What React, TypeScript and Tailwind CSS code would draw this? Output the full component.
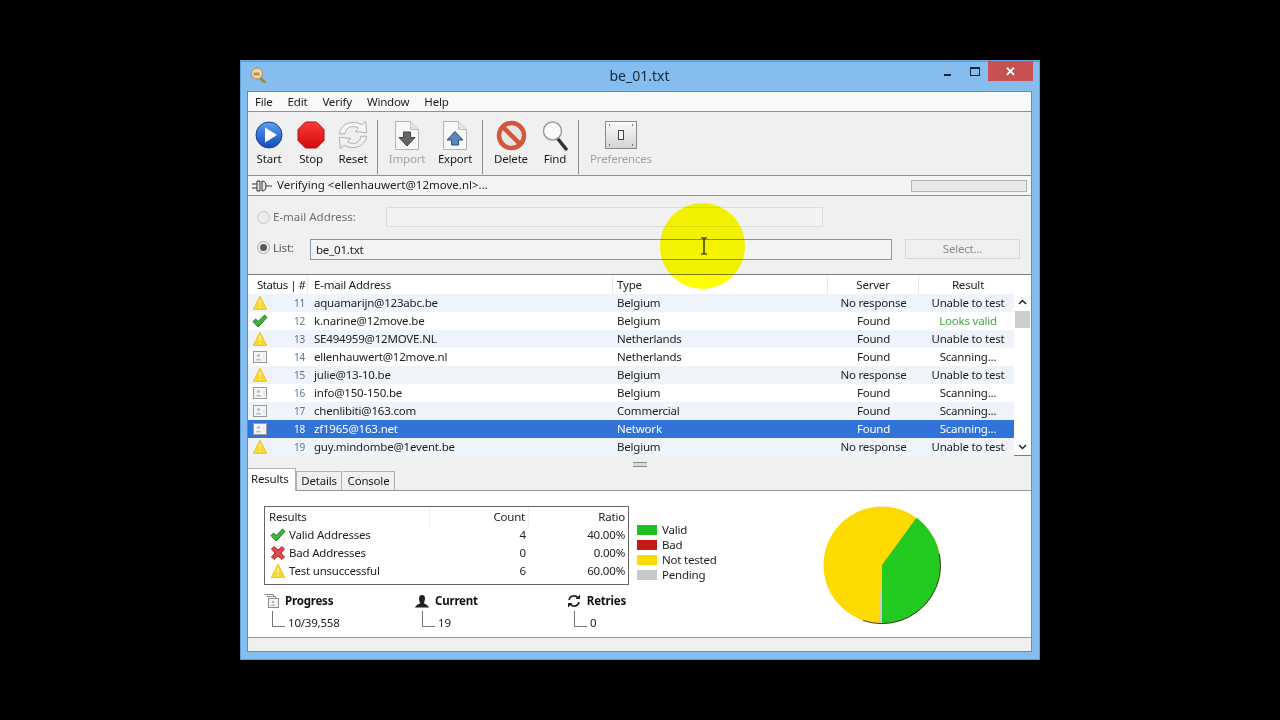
import React from 'react';

const rows = [
  { n: 11, email: 'aquamarijn@123abc.be', type: 'Belgium', server: 'No response', result: 'Unable to test', icon: 'warn' },
  { n: 12, email: 'k.narine@12move.be', type: 'Belgium', server: 'Found', result: 'Looks valid', icon: 'ok' },
  { n: 13, email: 'SE494959@12MOVE.NL', type: 'Netherlands', server: 'Found', result: 'Unable to test', icon: 'warn' },
  { n: 14, email: 'ellenhauwert@12move.nl', type: 'Netherlands', server: 'Found', result: 'Scanning...', icon: 'card' },
  { n: 15, email: 'julie@13-10.be', type: 'Belgium', server: 'No response', result: 'Unable to test', icon: 'warn' },
  { n: 16, email: 'info@150-150.be', type: 'Belgium', server: 'Found', result: 'Scanning...', icon: 'card' },
  { n: 17, email: 'chenlibiti@163.com', type: 'Commercial', server: 'Found', result: 'Scanning...', icon: 'card' },
  { n: 18, email: 'zf1965@163.net', type: 'Network', server: 'Found', result: 'Scanning...', icon: 'card' },
  { n: 19, email: 'guy.mindombe@1event.be', type: 'Belgium', server: 'No response', result: 'Unable to test', icon: 'warn' },
];

const Warn = () => (
  <svg width="16" height="16" viewBox="0 0 16 16">
    <path d="M8 1.200 14.800 14.500H1.200Z" fill="#fcd82e" stroke="#eec52f" strokeWidth="1" strokeLinejoin="round" />
    <path d="M8 5v5" stroke="#fff1a0" strokeWidth="1.600" />
    <circle cx="8" cy="12.200" r="0.900" fill="#fff1a0" />
  </svg>
);

const Check = () => (
  <svg width="16" height="16" viewBox="0 0 16 16">
    <path d="M1 8.600 3.600 6l2.600 2.500L12.600 2 15 4.400 6.200 14Z" fill="#3fb63a" stroke="#1f7a26" strokeWidth="1" strokeLinejoin="round" />
  </svg>
);

const Cross = () => (
  <svg width="16" height="16" viewBox="0 0 16 16">
    <path d="M1.500 4 4 1.500 8 5l4-3.500L14.500 4 11 8l3.500 4-2.500 2.500L8 11l-4 3.500L1.500 12 5 8Z" fill="#e0484c" stroke="#a83538" strokeWidth="1" strokeLinejoin="round" />
  </svg>
);

const Card = () => (
  <svg width="14" height="12" viewBox="0 0 14 12">
    <rect x="0.500" y="0.500" width="13" height="11" fill="#f6f6f6" stroke="#9a9a9a" />
    <circle cx="5.500" cy="4.500" r="1.600" fill="#bdbdbd" />
    <path d="M2.500 9.500c.4-2.200 5.600-2.200 6 0Z" fill="#bdbdbd" />
    <path d="M10 5h2M10 7.500h2" stroke="#d8d8d8" />
  </svg>
);

const StartIcon = () => (
  <svg width="28" height="28" viewBox="0 0 28 28">
    <defs>
      <linearGradient id="startFill" x1="0" y1="0" x2="0" y2="1">
        <stop offset="0" stopColor="#58a3ee" />
        <stop offset="1" stopColor="#1748b8" />
      </linearGradient>
    </defs>
    <circle cx="14" cy="14" r="13" fill="url(#startFill)" stroke="#1c3f94" />
    <path d="M10 6.500 22 14 10 21.500Z" fill="#fff" />
  </svg>
);

const StopIcon = () => (
  <svg width="28" height="28" viewBox="0 0 28 28">
    <defs>
      <linearGradient id="stopFill" x1="0" y1="0" x2="0" y2="1">
        <stop offset="0" stopColor="#fb3a3a" />
        <stop offset="1" stopColor="#d20a0a" />
      </linearGradient>
    </defs>
    <path d="M8.500 1h11L27 8.500v11L19.500 27h-11L1 19.500v-11Z" fill="url(#stopFill)" stroke="#a51616" />
  </svg>
);

const ResetIcon = () => (
  <svg width="32" height="32" viewBox="3 1 26 28">
    <path d="M4 14C5 6 14 1 24 6l3-3 1 10-10-1 3-3C15 6 10 8 9 14Z" fill="#f7f7f7" stroke="#a8a8a8" strokeWidth="0.800" strokeLinejoin="round" />
    <path d="M28 16c-1 8-10 13-20 8l-3 3-1-10 10 1-3 3c6 3 11 1 12-5Z" fill="#f1f1f1" stroke="#a8a8a8" strokeWidth="0.800" strokeLinejoin="round" />
  </svg>
);

const DocArrow = ({ up }: { up?: boolean }) => (
  <svg width="24" height="29" viewBox="0 0 24 29">
    <path d="M.5.5h15l8 8v20H.5Z" fill="#f8f8f8" stroke="#b4b4b4" />
    <path d="M15.500.5v8h8" fill="#e6e6e6" stroke="#c0c0c0" />
    {up ? (
      <path d="M12 10.500 20 19h-4.500v5h-7v-5H4Z" fill="#5c85bb" stroke="#2c4c7a" strokeLinejoin="round" />
    ) : (
      <path d="M8.500 11h7v5.500H20L12 25 4 16.500h4.500Z" fill="#666" stroke="#444" strokeLinejoin="round" />
    )}
  </svg>
);

const DeleteIcon = () => (
  <svg width="31" height="31" viewBox="0 0 31 31">
    <circle cx="15.500" cy="15.500" r="12.500" fill="#e6e6e6" stroke="#d4573a" strokeWidth="4.500" />
    <path d="M7 7 24 24" stroke="#d4573a" strokeWidth="4.500" />
  </svg>
);

const FindIcon = () => (
  <svg width="27" height="31" viewBox="0 0 27 31">
    <path d="M16 19 24 29" stroke="#333" strokeWidth="3.500" strokeLinecap="round" />
    <circle cx="10.500" cy="11" r="9" fill="#fafafa" stroke="#9c9c9c" strokeWidth="1.500" />
  </svg>
);

const PrefsIcon = () => (
  <svg width="32" height="28" viewBox="0 0 32 28">
    <defs>
      <linearGradient id="prefFill" x1="0" y1="0" x2="0" y2="1">
        <stop offset="0" stopColor="#fbfbfb" />
        <stop offset="1" stopColor="#d2d2d2" />
      </linearGradient>
    </defs>
    <rect x="0.500" y="0.500" width="31" height="27" fill="url(#prefFill)" stroke="#8a8a8a" />
    <path d="M4 4h1M27 4h1M4 24h1M27 24h1" stroke="#555" strokeWidth="1.500" />
    <rect x="13.500" y="9.500" width="5" height="9" fill="#f4f4f4" stroke="#444" />
  </svg>
);

const PlugIcon = () => (
  <svg width="20" height="12" viewBox="0 0 20 12">
    <path d="M0 4h5M0 8h5M14 6h6" stroke="#333" strokeWidth="1.200" />
    <path d="M5 1h3v10H5ZM10 1c3 0 4 2 4 5s-1 5-4 5Z" fill="#e8e8e8" stroke="#333" />
  </svg>
);

const AppIcon = () => (
  <svg width="16" height="16" viewBox="0 0 16 16">
    <path d="M9 10 14.500 15" stroke="#a8842c" strokeWidth="2.500" strokeLinecap="round" />
    <circle cx="7" cy="6.500" r="5.500" fill="#e8d9bd" stroke="#b08e4c" />
    <path d="M3.500 5.500h6v3h-6Z" fill="#d08a50" />
  </svg>
);

const ToolButton = ({ w, label, muted, children }: { w: string; label: string; muted?: boolean; children: React.ReactNode }) => (
  <div className={`flex flex-col items-center ${w}`}>
    <div className="flex h-[34px] items-center justify-center">{children}</div>
    <div className={`mt-[-1px] leading-[16px] ${muted ? 'text-[#a3a3a3]' : 'text-[#1a1a1a]'}`}>{label}</div>
  </div>
);

const Sep = ({ r }: { r: string }) => <div className={`ml-[3px] h-[54px] w-px self-center bg-[#8c8c8c] ${r}`} />;

const Stat = ({ w, icon, label, value }: { w: string; icon: React.ReactNode; label: string; value: string }) => (
  <div className={w}>
    <div className="flex h-[18px] items-center gap-[5px]">
      <div className="flex w-[16px] justify-center">{icon}</div>
      <span className="font-bold text-[#111]">{label}</span>
    </div>
    <div className="mt-[1px] flex">
      <div className="ml-[8px] h-[16px] w-[13px] border-b border-l border-[#777]" />
      <span className="ml-[3px] mt-[4px] leading-[16px] text-[#222]">{value}</span>
    </div>
  </div>
);

export default function App() {
  return (
    <div className="flex h-screen items-center justify-center whitespace-nowrap bg-black font-['Noto_Sans','Open_Sans',sans-serif] text-[11.5px] tracking-[-0.2px] text-[#1a1a1a]">
      <div className="relative flex h-[600px] w-[800px] flex-col border-t border-[#6fa9dc] bg-[#85bdef] pl-[7px] pr-[8px] pb-[8px] shadow-[inset_0_0_0_1px_#5f9fd8]">
        {/* Title bar */}
        <div className="grid h-[30px] shrink-0 grid-cols-[1fr_auto_1fr] items-center">
          <div className="pb-[2px] pl-[3px]"><AppIcon /></div>
          <div className="pb-[2px] text-[14px] tracking-normal text-[#16283a]">be_01.txt</div>
          <div className="flex h-full items-start justify-end">
            <div className="mt-[13px] mr-[19px] h-[2px] w-[7px] bg-[#14283c]" />
            <div className="mt-[6px] mr-[8px] h-[9px] w-[10px] border border-t-2 border-[#14283c]" />
            <div className="mr-[-1px] flex h-[20px] w-[45px] items-center justify-center bg-[#c75050] text-[13px] font-bold leading-none text-white">✕</div>
          </div>
        </div>

        <div className="flex min-h-0 flex-1 flex-col border border-[#6d8ba8] bg-[#f0f0f0]">
          {/* Menu */}
          <div className="flex h-[20px] shrink-0 items-center gap-[15px] border-b border-[#8f8f8f] bg-[#f8f9fb] pl-[7px]">
            <span>File</span><span>Edit</span><span>Verify</span><span>Window</span><span>Help</span>
          </div>

          {/* Toolbar */}
          <div className="flex h-[64px] shrink-0 items-start border-b border-[#8f8f8f] bg-[#f0f0f0] pt-[6px]">
            <ToolButton w="w-[42px]" label="Start"><StartIcon /></ToolButton>
            <ToolButton w="w-[42px]" label="Stop"><StopIcon /></ToolButton>
            <ToolButton w="w-[42px]" label="Reset"><ResetIcon /></ToolButton>
            <Sep r="mr-[5px]" />
            <ToolButton w="w-[48px]" label="Import" muted><DocArrow /></ToolButton>
            <ToolButton w="w-[48px]" label="Export"><DocArrow up /></ToolButton>
            <Sep r="mr-[4px] ml-[2px]" />
            <ToolButton w="w-[48px]" label="Delete"><DeleteIcon /></ToolButton>
            <ToolButton w="w-[40px]" label="Find"><FindIcon /></ToolButton>
            <Sep r="mr-[5px]" />
            <ToolButton w="w-[74px]" label="Preferences" muted><PrefsIcon /></ToolButton>
          </div>

          {/* Status line */}
          <div className="flex h-[20px] shrink-0 items-center border-b border-[#8f8f8f] bg-[#f4f4f4] pl-[4px] pr-[4px]">
            <PlugIcon />
            <span className="ml-[5px] flex-1 pb-[2px] tracking-normal text-[#222]">Verifying &lt;ellenhauwert@12move.nl&gt;...</span>
            <div className="h-[12px] w-[116px] border border-[#b5b5b5] bg-[#e8e8e8]" />
          </div>

          {/* Address form */}
          <div className="h-[79px] shrink-0 border-b border-[#7c7c7c] bg-[#f0f0f0] pl-[9px]">
            <div className="mt-[11px] flex h-[20px] items-center">
              <div className="h-[13px] w-[13px] rounded-full border border-[#c4c4c4] bg-[#ececec]" />
              <span className="ml-[3px] w-[113px] tracking-normal text-[#6e6e6e]">E-mail Address:</span>
              <div className="h-[20px] w-[437px] border border-[#dcdcdc] bg-[#f2f2f2]" />
            </div>
            <div className="mt-[12px] flex h-[21px] items-start">
              <div className="mt-[2px] flex h-[13px] w-[13px] items-center justify-center rounded-full border border-[#b0b0b0] bg-[#ececec]">
                <div className="h-[7px] w-[7px] rounded-full bg-[#5a5a5a]" />
              </div>
              <span className="ml-[3px] w-[37px] text-[#555]">List:</span>
              <div className="flex h-[21px] w-[582px] items-center border border-[#7b9db0] bg-[#f3f3f3] pl-[5px] text-[#222]">be_01.txt</div>
              <div className="ml-[13px] flex h-[20px] w-[115px] items-center justify-center border border-[#d8d8d8] bg-[#efefef] text-[#8a8a8a]">Select...</div>
            </div>
          </div>

          {/* Address list */}
          <div className="flex h-[181px] shrink-0 flex-col border-b border-[#7c7c7c] bg-white">
            <div className="grid h-[19px] shrink-0 grid-cols-[60px_305px_215px_91px_111px] items-center leading-[18px] text-[#222]">
              <div className="border-r border-[#e8e8e8] pl-[9px] tracking-[-0.5px]">Status | #</div>
              <div className="border-r border-[#e8e8e8] pl-[6px]">E-mail Address</div>
              <div className="border-r border-[#e8e8e8] pl-[4px]">Type</div>
              <div className="border-r border-[#e8e8e8] text-center">Server</div>
              <div className="pl-[3px] pr-[16px] text-center">Result</div>
            </div>
            <div className="flex min-h-0 flex-1">
              <div className="w-[766px] shrink-0">
                {rows.map((r, i) => {
                  const selected = r.n === 18;
                  const bg = selected ? 'bg-[#3173d8] text-white' : i % 2 === 0 ? 'bg-[#eff3fb]' : 'bg-white';
                  return (
                    <div key={r.n} className={`grid h-[18px] grid-cols-[60px_305px_215px_91px_95px] items-center ${selected ? '' : 'text-[#222]'} ${bg}`}>
                      <div className="flex items-center justify-between pl-[4px] pr-[3px]">
                        <div className="flex w-[16px] justify-center">
                          {r.icon === 'warn' ? <Warn /> : r.icon === 'ok' ? <Check /> : <Card />}
                        </div>
                        <span className={`text-[10px] ${selected ? 'text-white' : 'text-[#5c7690]'}`}>{r.n}</span>
                      </div>
                      <div className="pl-[6px]">{r.email}</div>
                      <div className="pl-[4px]">{r.type}</div>
                      <div className="text-center">{r.server}</div>
                      <div className={`pl-[3px] text-center ${r.result === 'Looks valid' ? 'text-[#3cab3c]' : ''}`}>{r.result}</div>
                    </div>
                  );
                })}
              </div>
              <div className="flex flex-1 flex-col items-center bg-white">
                <svg className="mt-[5px]" width="9" height="6" viewBox="0 0 9 6"><path d="M1 5 4.500 1.500 8 5" fill="none" stroke="#222" strokeWidth="1.500" /></svg>
                <div className="mt-[6px] h-[17px] w-[15px] bg-[#cdcdcd]" />
                <div className="flex-1" />
                <svg className="mb-[5px]" width="9" height="6" viewBox="0 0 9 6"><path d="M1 1 4.500 4.500 8 1" fill="none" stroke="#222" strokeWidth="1.500" /></svg>
              </div>
            </div>
          </div>

          {/* Splitter */}
          <div className="flex h-[12px] shrink-0 items-center justify-center bg-[#f0f0f0]">
            <div className="mt-[4px] h-[5px] w-[14px] border-y border-[#8a8a8a] bg-[#d8d8d8]" />
          </div>

          {/* Tabs */}
          <div className="flex h-[23px] shrink-0 items-end border-b border-[#9a9a9a] bg-[#f0f0f0]">
            <div className="mb-[-1px] flex h-[23px] w-[48px] items-center border-r border-t border-[#b0b0b0] bg-white pb-[2px] pl-[3px]">Results</div>
            <div className="flex h-[19px] w-[46px] items-center justify-center border-x border-t border-[#b0b0b0] bg-[#f0f0f0]">Details</div>
            <div className="ml-px flex h-[19px] w-[52px] items-center justify-center border-r border-t border-[#b0b0b0] bg-[#f0f0f0]">Console</div>
          </div>

          {/* Results pane */}
          <div className="flex min-h-0 flex-1 border-b border-[#9a9a9a] bg-white pl-[16px] pt-[15px]">
            <div className="w-[365px] shrink-0">
              <div className="h-[79px] border border-[#666] pt-px text-[#222]">
                <div className="grid h-[18px] grid-cols-[165px_99px_99px] items-center">
                  <div className="border-r border-[#efefef] pl-[4px]">Results</div>
                  <div className="border-r border-[#efefef] pr-[3px] text-right">Count</div>
                  <div className="pr-[3px] text-right">Ratio</div>
                </div>
                {[
                  { icon: <Check />, name: 'Valid Addresses', count: '4', ratio: '40.00%' },
                  { icon: <Cross />, name: 'Bad Addresses', count: '0', ratio: '0.00%' },
                  { icon: <Warn />, name: 'Test unsuccessful', count: '6', ratio: '60.00%' },
                ].map((s) => (
                  <div key={s.name} className="grid h-[18px] grid-cols-[165px_99px_99px] items-center">
                    <div className="flex items-center gap-[3px] pl-[5px]">{s.icon}<span>{s.name}</span></div>
                    <div className="pr-[3px] text-right">{s.count}</div>
                    <div className="pr-[3px] text-right">{s.ratio}</div>
                  </div>
                ))}
              </div>
              <div className="mt-[7px] flex">
                <Stat
                  w="w-[150px]"
                  label="Progress"
                  value="10/39,558"
                  icon={
                    <svg width="16" height="15" viewBox="0 0 16 15">
                      <path d="M.5.500h9v2M2.500 2.500h9v2" fill="none" stroke="#8a8a8a" />
                      <rect x="4.500" y="4.500" width="10" height="9" fill="#f4f4f4" stroke="#8a8a8a" />
                      <circle cx="9" cy="8" r="1.300" fill="#b5b5b5" />
                      <path d="M6.500 12c.4-2 4.600-2 5 0Z" fill="#b5b5b5" />
                    </svg>
                  }
                />
                <Stat
                  w="w-[152px]"
                  label="Current"
                  value="19"
                  icon={
                    <svg width="14" height="13" viewBox="0 0 14 13">
                      <path d="M7 0c2 0 3 1.500 3 3.500S9 7 9 8c0 1 4 1.500 5 4.500H0C1 9.500 5 9 5 8S4 5.500 4 3.500 5 0 7 0Z" fill="#222" />
                    </svg>
                  }
                />
                <Stat
                  w="w-[60px]"
                  label="Retries"
                  value="0"
                  icon={
                    <svg width="14" height="14" viewBox="0 0 14 14">
                      <path d="M2 6a5 5 0 0 1 9-2M12 8a5 5 0 0 1-9 2" fill="none" stroke="#222" strokeWidth="1.600" />
                      <path d="M8.500 5H13V.500ZM5.500 9H1v4.500Z" fill="#222" />
                    </svg>
                  }
                />
              </div>
            </div>

            <div className="ml-[8px] mt-[16px] w-[100px] shrink-0 text-[#222]">
              {[
                { c: 'bg-[#22c01e]', t: 'Valid' },
                { c: 'bg-[#c81a14]', t: 'Bad' },
                { c: 'bg-[#fedb00]', t: 'Not tested' },
                { c: 'bg-[#c8c8c8]', t: 'Pending' },
              ].map((l) => (
                <div key={l.t} className="flex h-[15px] items-center">
                  <div className={`h-[10px] w-[20px] ${l.c}`} />
                  <span className="ml-[5px]">{l.t}</span>
                </div>
              ))}
            </div>

            <svg className="ml-[86px] shrink-0" width="118" height="118" viewBox="0 0 118 118">
              <circle cx="59" cy="59" r="58.500" fill="#fedb00" />
              <path d="M59 59 93.400 11.700A58.500 58.500 0 0 1 59 117.500Z" fill="#22c91e" />
              <path d="M59 59V117.500L55.500 117.400Z" fill="#c8c8c8" />
              <path d="M108 91A58.500 58.500 0 0 1 40 114.500M116.500 48A58.500 58.500 0 0 1 108 91" fill="none" stroke="#111" strokeWidth="0.800" />
            </svg>
          </div>

          {/* Status bar */}
          <div className="h-[13px] shrink-0 bg-[#f0f0f0]" />
        </div>

        {/* Mouse highlight and cursor */}
        <div className="pointer-events-none absolute left-[420px] top-[142px] h-[86px] w-[85px] rounded-full bg-[#ffff00] mix-blend-multiply" />
        <svg className="pointer-events-none absolute left-[460px] top-[176px]" width="8" height="18" viewBox="0 0 8 18">
          <path d="M1 1h6M1 17h6M4 1v16" fill="none" stroke="#111" strokeWidth="1.200" />
        </svg>
      </div>
    </div>
  );
}
